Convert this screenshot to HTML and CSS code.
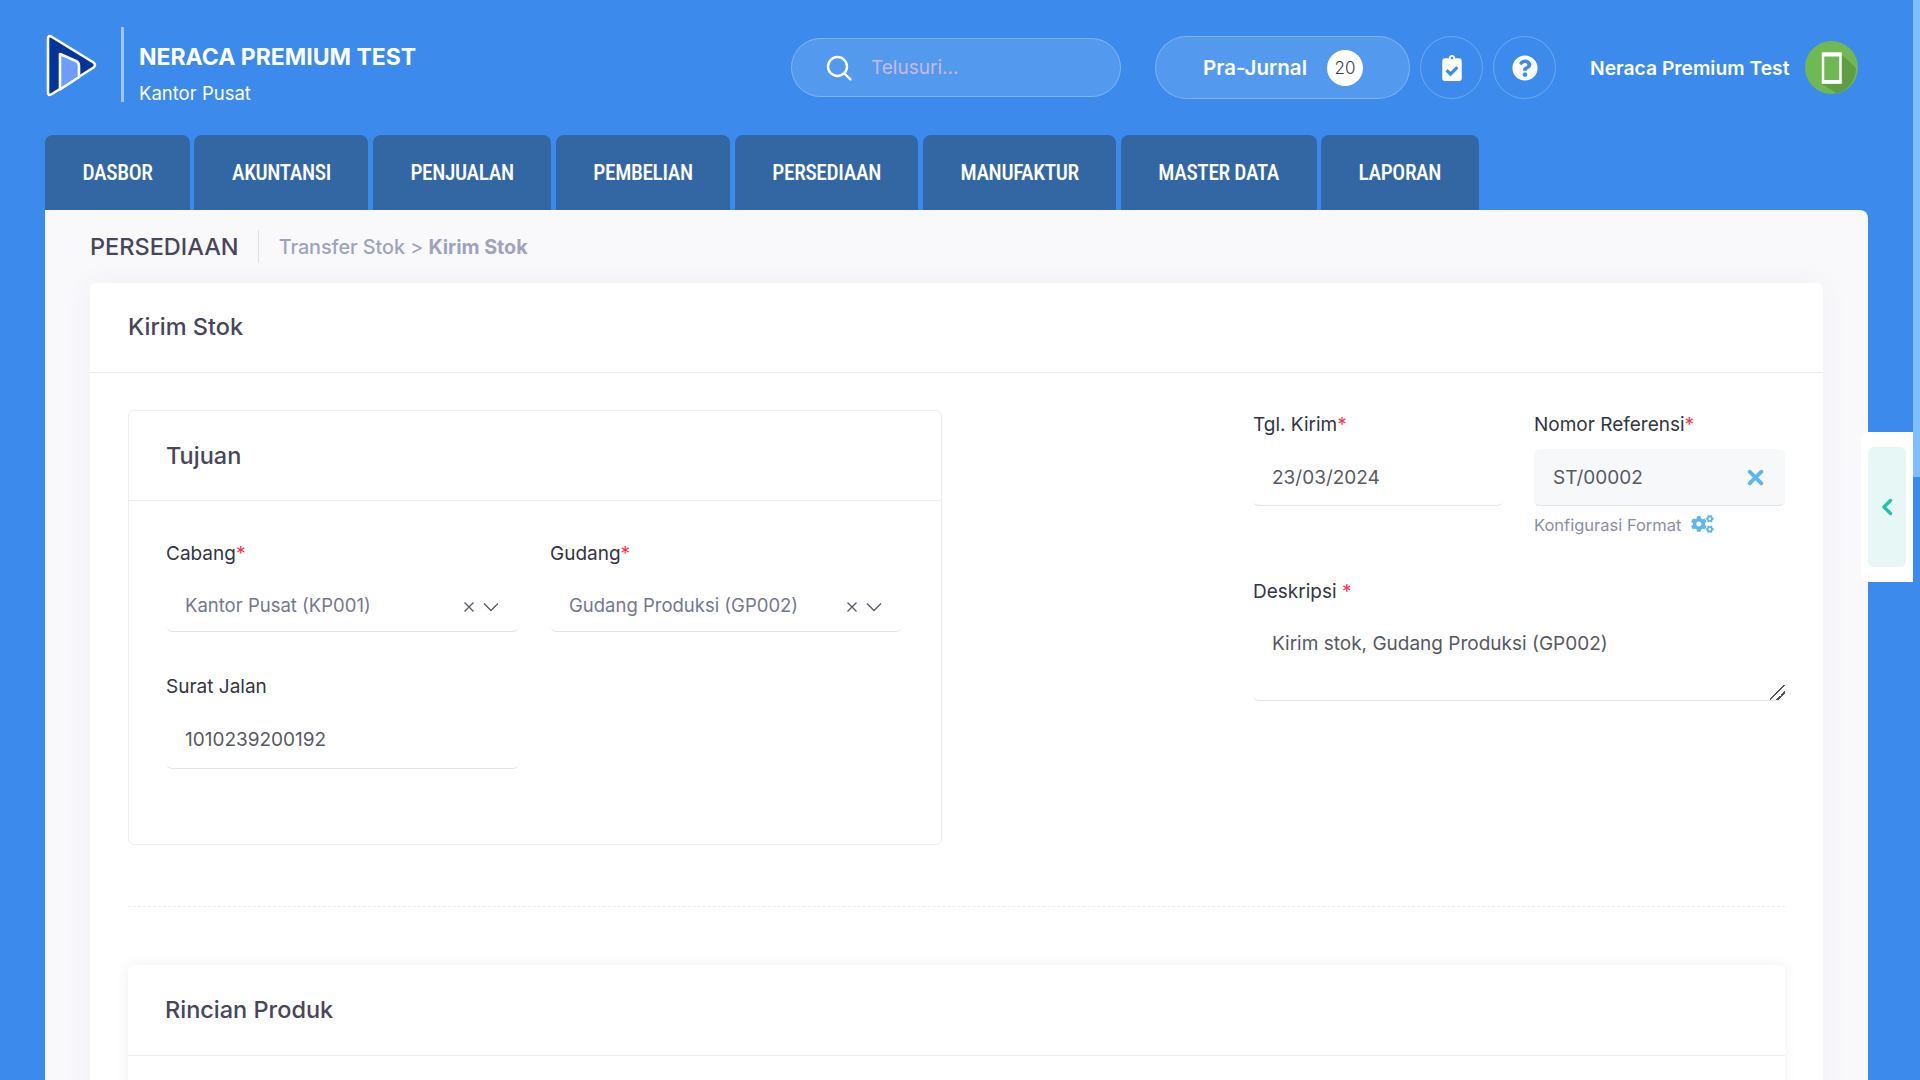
FILE: index.html
```html
<!DOCTYPE html>
<html lang="id">
<head>
<meta charset="utf-8">
<title>Kirim Stok</title>
<link rel="stylesheet" href="styles.css">
</head>
<body>
<header class="topbar">
  <svg class="logo" viewBox="47 33 52 66" aria-hidden="true">
    <path d="M49 39 Q49 34.500 53 37 L94.500 62.500 Q97.500 65 94.500 67.500 L53 94 Q49 96.500 49 92 Z" fill="#043399" stroke="#fff" stroke-width="2.600" stroke-linejoin="round"/>
    <path d="M61 54 L77 61 Q80 62.500 80 66 L80 77 L61 89.500 Z" fill="#6f9cff" stroke="#fff" stroke-width="2.600" stroke-linejoin="round"/>
  </svg>
  <div class="brand">
    <div class="brand-title">NERACA PREMIUM TEST</div>
    <div class="brand-sub">Kantor Pusat</div>
  </div>
  <div class="search">
    <svg class="search-icon" viewBox="0 0 28 28" aria-hidden="true"><circle cx="12.5" cy="12.5" r="9.5" fill="none" stroke="#fff" stroke-width="2.4"/><path d="M19.5 19.5 L25.5 25.5" stroke="#fff" stroke-width="2.4" stroke-linecap="round"/></svg>
    <span class="search-text">Telusuri...</span>
  </div>
  <div class="prajurnal">
    <span class="prajurnal-text">Pra-Jurnal</span>
    <span class="badge">20</span>
  </div>
  <div class="round-btn">
    <svg class="icon-clip" viewBox="0 0 384 512" aria-hidden="true"><path fill="#fff" d="M336 64h-80c0-35.300-28.700-64-64-64s-64 28.700-64 64H48C21.500 64 0 85.500 0 112v352c0 26.500 21.500 48 48 48h288c26.500 0 48-21.500 48-48V112c0-26.500-21.500-48-48-48zM192 40c13.300 0 24 10.700 24 24s-10.700 24-24 24-24-10.700-24-24 10.700-24 24-24zm121.200 231.800l-143 141.800c-4.700 4.700-12.300 4.600-17-.1l-82.600-83.300c-4.700-4.700-4.600-12.300.1-17L99.100 285c4.700-4.700 12.300-4.600 17 .1l46 46.400 106-105.200c4.700-4.700 12.300-4.600 17 .1l28.200 28.400c4.700 4.800 4.600 12.300-.1 17z"/></svg>
  </div>
  <div class="round-btn">
    <svg class="icon-help" viewBox="0 0 512 512" aria-hidden="true"><path fill="#fff" d="M504 256c0 136.997-111.043 248-248 248S8 392.997 8 256C8 119.083 119.043 8 256 8s248 111.083 248 248zM262.655 90c-54.497 0-89.255 22.957-116.549 63.758-3.536 5.286-2.353 12.415 2.715 16.258l34.699 26.310c5.205 3.947 12.621 3.008 16.665-2.122 17.864-22.658 30.113-35.797 57.303-35.797 20.429 0 45.698 13.148 45.698 32.958 0 14.976-12.363 22.667-32.534 33.976C247.128 238.528 216 254.941 216 296v4c0 6.627 5.373 12 12 12h56c6.627 0 12-5.373 12-12v-1.333c0-28.462 83.186-29.647 83.186-106.667 0-58.002-60.165-102-116.531-102zM256 338c-25.365 0-46 20.635-46 46 0 25.364 20.635 46 46 46s46-20.636 46-46c0-25.365-20.635-46-46-46z"/></svg>
  </div>
  <span class="user-name">Neraca Premium Test</span>
  <svg class="avatar" viewBox="0 0 53 53" aria-hidden="true">
    <circle cx="26.500" cy="26.500" r="26.500" fill="#6fb853"/>
    <path d="M36 13 L51 27 A26.500 26.500 0 0 1 32 52.500 L17 43 Z" fill="#5f9d43"/>
    <rect x="18" y="12.500" width="17.500" height="29" fill="#6fb853" stroke="#fff" stroke-width="2.500"/>
    <path d="M17 13h19.500v2.500H17zM17 39h19.500v3.500H17z" fill="#fff"/>
  </svg>
</header>

<nav class="tabs">
  <a class="tab">DASBOR</a>
  <a class="tab">AKUNTANSI</a>
  <a class="tab">PENJUALAN</a>
  <a class="tab">PEMBELIAN</a>
  <a class="tab">PERSEDIAAN</a>
  <a class="tab">MANUFAKTUR</a>
  <a class="tab">MASTER DATA</a>
  <a class="tab">LAPORAN</a>
</nav>

<main class="content">
  <div class="crumbs">
    <h1 class="crumb-title">PERSEDIAAN</h1>
    <span class="crumb-path">Transfer Stok <span class="crumb-sep">&gt;</span> <b class="crumb-current">Kirim Stok</b></span>
  </div>

  <section class="card">
    <h2 class="card-head">Kirim Stok</h2>
    <div class="card-body">
      <div class="top-row">
        <div class="panel">
          <h3 class="panel-head">Tujuan</h3>
          <div class="panel-body">
            <div class="field">
              <label class="label">Cabang<i class="req">*</i></label>
              <div class="input select"><span class="select-value">Kantor Pusat (KP001)</span>
                <svg class="select-x" viewBox="0 0 12 12" aria-hidden="true"><path d="M1.500 1.500l9 9M10.500 1.500l-9 9" stroke="#555a66" stroke-width="1.300"/></svg>
                <svg class="select-chev" viewBox="0 0 16 10" aria-hidden="true"><path d="M1 1.500l7 7 7-7" fill="none" stroke="#555a66" stroke-width="1.300"/></svg>
              </div>
            </div>
            <div class="field">
              <label class="label">Gudang<i class="req">*</i></label>
              <div class="input select"><span class="select-value">Gudang Produksi (GP002)</span>
                <svg class="select-x" viewBox="0 0 12 12" aria-hidden="true"><path d="M1.500 1.500l9 9M10.500 1.500l-9 9" stroke="#555a66" stroke-width="1.300"/></svg>
                <svg class="select-chev" viewBox="0 0 16 10" aria-hidden="true"><path d="M1 1.500l7 7 7-7" fill="none" stroke="#555a66" stroke-width="1.300"/></svg>
              </div>
            </div>
            <div class="field">
              <label class="label">Surat Jalan</label>
              <div class="input plain">1010239200192</div>
            </div>
          </div>
        </div>

        <div class="side-form">
          <div class="side-grid">
            <div class="field-r">
              <label class="label">Tgl. Kirim<i class="req">*</i></label>
              <div class="input tall">23/03/2024</div>
            </div>
            <div class="field-r">
              <label class="label">Nomor Referensi<i class="req">*</i></label>
              <div class="input tall filled">ST/00002
                <svg class="ref-x" viewBox="0 0 16 16" aria-hidden="true"><path d="M2.500 2.500l11 11M13.500 2.500l-11 11" stroke="#5cb7ee" stroke-width="3.600" stroke-linecap="round"/></svg>
              </div>
              <div class="format-link">Konfigurasi Format
                <svg class="cogs" viewBox="0 0 640 512" aria-hidden="true"><path fill="#5cb7ee" d="M512.100 191l-8.200 14.300c-3 5.300-9.400 7.500-15.100 5.400-11.800-4.400-22.600-10.700-32.100-18.600-4.600-3.800-5.800-10.500-2.800-15.700l8.200-14.300c-6.900-8-12.300-17.300-15.900-27.400h-16.500c-6 0-11.200-4.300-12.200-10.300-2-12-2.100-24.600 0-37.100 1-6 6.200-10.400 12.200-10.400h16.500c3.600-10.100 9-19.400 15.900-27.400l-8.200-14.300c-3-5.200-1.900-11.900 2.800-15.700 9.500-7.900 20.400-14.200 32.100-18.600 5.700-2.100 12.100.1 15.100 5.400l8.200 14.300c10.500-1.900 21.200-1.900 31.700 0L552 6.300c3-5.300 9.400-7.500 15.100-5.400 11.800 4.400 22.600 10.700 32.100 18.600 4.600 3.800 5.800 10.500 2.800 15.700l-8.200 14.300c6.900 8 12.300 17.300 15.900 27.400h16.500c6 0 11.200 4.300 12.200 10.300 2 12 2.100 24.600 0 37.100-1 6-6.200 10.400-12.200 10.400h-16.500c-3.600 10.100-9 19.400-15.900 27.400l8.200 14.300c3 5.200 1.900 11.900-2.800 15.700-9.500 7.900-20.400 14.200-32.100 18.600-5.700 2.100-12.100-.1-15.100-5.400l-8.200-14.300c-10.400 1.900-21.200 1.900-31.700 0zm-10.500-58.800c38.500 29.600 82.400-14.300 52.800-52.800-38.500-29.700-82.400 14.300-52.800 52.800zM386.300 286.100l33.700 16.800c10.100 5.800 14.500 18.100 10.500 29.100-8.900 24.200-26.400 46.400-42.600 65.800-7.400 8.900-20.200 11.100-30.300 5.300l-29.100-16.800c-16 13.700-34.600 24.600-54.900 31.700v33.600c0 11.600-8.300 21.600-19.700 23.600-24.600 4.200-50.400 4.400-75.900 0-11.500-2-20-11.900-20-23.600V418c-20.300-7.200-38.900-18-54.900-31.700L74 403c-10 5.800-22.900 3.600-30.300-5.300-16.200-19.400-33.300-41.600-42.200-65.700-4-10.900.4-23.200 10.500-29.100l33.300-16.800c-3.900-20.900-3.900-42.400 0-63.400L12 205.800c-10.100-5.800-14.600-18.100-10.500-29 8.900-24.200 26-46.400 42.200-65.800 7.400-8.900 20.200-11.100 30.300-5.300l29.100 16.800c16-13.700 34.600-24.600 54.900-31.700V57.100c0-11.500 8.200-21.500 19.600-23.500 24.600-4.200 50.500-4.400 76-.1 11.500 2 20 11.900 20 23.600v33.600c20.300 7.200 38.900 18 54.900 31.700l29.100-16.800c10-5.800 22.900-3.600 30.300 5.300 16.200 19.400 33.200 41.600 42.100 65.800 4 10.900.1 23.200-10 29.100l-33.700 16.800c3.900 21 3.900 42.500 0 63.500zm-117.600 21.100c59.200-77-28.700-164.900-105.700-105.700-59.200 77 28.700 164.900 105.700 105.700zm243.400 182.700l-8.200 14.300c-3 5.300-9.400 7.500-15.100 5.400-11.800-4.400-22.600-10.700-32.100-18.600-4.600-3.800-5.800-10.500-2.800-15.700l8.200-14.300c-6.900-8-12.300-17.300-15.900-27.400h-16.500c-6 0-11.200-4.300-12.200-10.300-2-12-2.100-24.600 0-37.100 1-6 6.200-10.400 12.200-10.400h16.500c3.600-10.100 9-19.400 15.900-27.400l-8.200-14.300c-3-5.200-1.900-11.900 2.800-15.700 9.500-7.900 20.400-14.200 32.100-18.600 5.700-2.100 12.100.1 15.100 5.400l8.200 14.300c10.500-1.900 21.200-1.900 31.700 0l8.200-14.300c3-5.300 9.400-7.500 15.100-5.400 11.800 4.400 22.600 10.700 32.100 18.600 4.600 3.800 5.800 10.500 2.800 15.700l-8.200 14.300c6.900 8 12.300 17.300 15.900 27.400h16.500c6 0 11.200 4.300 12.200 10.300 2 12 2.100 24.600 0 37.100-1 6-6.200 10.400-12.200 10.400h-16.500c-3.600 10.100-9 19.400-15.900 27.400l8.200 14.300c3 5.200 1.900 11.900-2.800 15.700-9.500 7.900-20.400 14.200-32.100 18.600-5.700 2.100-12.100-.1-15.100-5.400l-8.200-14.300c-10.400 1.900-21.200 1.900-31.700 0zM501.600 431c38.500 29.600 82.400-14.300 52.800-52.800-38.500-29.600-82.400 14.300-52.800 52.800z"/></svg>
              </div>
            </div>
          </div>
          <div class="desc">
            <label class="label">Deskripsi <i class="req">*</i></label>
            <textarea class="textarea">Kirim stok, Gudang Produksi (GP002)</textarea>
          </div>
        </div>
      </div>

      <hr class="dashed">

      <section class="detail-card">
        <h3 class="detail-head">Rincian Produk</h3>
        <div class="detail-body"></div>
      </section>
    </div>
  </section>
</main>

<aside class="side-tab">
  <div class="side-tab-inner">
    <svg class="side-chev" viewBox="0 0 12 18" aria-hidden="true"><path d="M9.500 2.500L3 9l6.500 6.500" fill="none" stroke="#1fc5a8" stroke-width="3.400" stroke-linecap="round" stroke-linejoin="round"/></svg>
  </div>
</aside>
<div class="scroll-thumb"></div>
</body>
</html>
```
FILE: styles.css
```css
* { box-sizing: border-box; }
html, body { height: 100%; }
body {
  margin: 0;
  height: 1080px;
  overflow: hidden;
  position: relative;
  background: #3c8bec;
  font-family: Inter, Roboto, sans-serif;
  color: #48465b;
  display: flex;
  flex-direction: column;
}
h1, h2, h3 { margin: 0; }

/* top bar */
.topbar {
  height: 135px;
  flex: none;
  display: flex;
  align-items: center;
  padding-left: 46px;
  color: #fff;
}
.logo { width: 52px; height: 66px; flex: none; margin-top: -4px; }
.brand {
  margin-left: 23px;
  padding-left: 15px;
  height: 75px;
  margin-top: -7px;
  border-left: 3px solid rgba(255, 255, 255, 0.5);
  width: 670px;
  flex: none;
}
.brand-title { font-size: 23px; font-weight: 700; line-height: 26px; margin-top: 17px; white-space: nowrap; }
.brand-sub { font-size: 18.5px; line-height: 22px; margin-top: 12px; }
.search {
  width: 330px;
  height: 59px;
  flex: none;
  border: 1px solid rgba(255, 255, 255, 0.25);
  background: rgba(255, 255, 255, 0.12);
  border-radius: 30px;
  display: flex;
  align-items: center;
  padding-left: 33px;
}
.search-icon { width: 28px; height: 28px; flex: none; }
.search-text { margin-left: 18px; font-size: 19px; color: #c9b9e0; }
.prajurnal {
  margin-left: 34px;
  width: 255px;
  height: 63px;
  flex: none;
  border: 1px solid rgba(255, 255, 255, 0.25);
  background: rgba(255, 255, 255, 0.12);
  border-radius: 32px;
  display: flex;
  align-items: center;
  padding-left: 47px;
}
.prajurnal-text { font-size: 20.5px; font-weight: 600; width: 124px; flex: none; white-space: nowrap; }
.badge {
  width: 36px;
  height: 36px;
  border-radius: 50%;
  background: #fff;
  color: #3a3a4a;
  font-size: 17px;
  font-weight: 300;
  display: flex;
  align-items: center;
  justify-content: center;
  flex: none;
}
.round-btn {
  margin-left: 10px;
  width: 63px;
  height: 63px;
  flex: none;
  border-radius: 50%;
  border: 1px solid rgba(255, 255, 255, 0.25);
  display: flex;
  align-items: center;
  justify-content: center;
}
.icon-clip { width: 20px; height: 26px; }
.icon-help { width: 26px; height: 26px; }
.user-name { margin-left: 34px; font-size: 19.3px; font-weight: 600; width: 215px; flex: none; white-space: nowrap; }
.avatar { width: 53px; height: 53px; flex: none; }

/* tabs */
.tabs { display: flex; gap: 4.5px; padding-left: 45px; height: 75px; flex: none; }
.tab {
  background: #3367a3;
  color: #fff;
  border-radius: 8px 8px 0 0;
  font-family: Roboto, sans-serif;
  font-stretch: 75%;
  font-size: 21.35px;
  font-weight: 500;
  letter-spacing: -0.35px;
  line-height: 75px;
  padding: 0 37.5px;
  white-space: nowrap;
}

/* content */
.content {
  margin-left: 45px;
  width: 1823px;
  flex: 1;
  min-height: 0;
  background: #f9f9fc;
  border-radius: 0 8px 0 0;
  padding: 0 45px;
  overflow: hidden;
}
.crumbs { height: 73px; display: flex; align-items: center; }
.crumb-title { font-size: 23.5px; font-weight: 500; color: #48465b; padding-right: 19px; line-height: 33px; border-right: 1px solid #dcdde6; }
.crumb-path { margin-left: 20px; font-size: 19.8px; font-weight: 500; color: #9ea3bd; letter-spacing: -0.05px; }
.crumb-sep { font-weight: 400; }
.crumb-current { font-weight: 700; }

.card { background: #fff; border-radius: 6px 6px 0 0; box-shadow: 0 0 30px rgba(82, 63, 105, 0.05); }
.card-head {
  height: 90px;
  border-bottom: 1px solid #ebedf2;
  padding-left: 38px;
  font-size: 23.5px;
  font-weight: 500;
  line-height: 88px;
}
.card-body { padding: 37px 38px 38px; }
.top-row { display: flex; justify-content: space-between; }

.panel { width: 814px; height: 435px; flex: none; border: 1px solid #ebedf2; border-radius: 6px; }
.panel-head {
  height: 90px;
  border-bottom: 1px solid #ebedf2;
  padding-left: 37px;
  font-size: 23.5px;
  font-weight: 500;
  line-height: 90px;
}
.panel-body {
  display: grid;
  grid-template-columns: 353px 352px;
  column-gap: 31px;
  row-gap: 43px;
  padding: 41px 0 0 37px;
}
.label { display: block; font-size: 19px; line-height: 24px; color: #333542; }
.req { color: #f4364c; font-style: normal; }
.input {
  position: relative;
  margin-top: 12px;
  height: 55px;
  border-bottom: 1px solid #e2e5ec;
  border-radius: 6px;
  padding-left: 19px;
  font-size: 19px;
  line-height: 52px;
  color: #575962;
}
.select { margin-top: 11px; line-height: 56px; font-size: 18.5px; }
.plain { margin-top: 15px; }
.select-value { color: #74788d; }
.select-x { position: absolute; right: 44px; top: 24px; width: 12px; height: 12px; }
.select-chev { position: absolute; right: 20px; top: 25px; width: 16px; height: 10px; }

.side-form { width: 532px; flex: none; padding-top: 3px; }
.side-grid { display: grid; grid-template-columns: 250px 251px; column-gap: 31px; }
.tall { height: 57px; margin-top: 12px; line-height: 58px; }
.filled { background: #f7f8fa; }
.ref-x { position: absolute; right: 21px; top: 20px; width: 17px; height: 17px; }
.format-link {
  margin-top: 9px;
  font-size: 16.5px;
  line-height: 20px;
  color: #8a8ea3;
  display: flex;
  align-items: center;
  gap: 10px;
  white-space: nowrap;
}
.cogs { width: 23px; height: 18px; margin-top: -2px; }
.desc { margin-top: 45px; }
.textarea {
  display: block;
  width: 100%;
  height: 80px;
  margin-top: 17px;
  border: 0;
  border-bottom: 1px solid #e2e5ec;
  border-radius: 6px;
  padding: 11px 19px;
  font-family: inherit;
  font-size: 19px;
  line-height: 24px;
  color: #575962;
  background: #fff;
  outline: none;
  resize: vertical;
}
.textarea::-webkit-resizer {
  background: linear-gradient(135deg, transparent 0 46%, #555 46% 53%, transparent 53% 70%, #555 70% 77%, transparent 77%);
}

.dashed { margin: 61px 0 58px; border: 0; border-top: 1px dashed #ebedf2; height: 0; }
.detail-card { background: #fff; border-radius: 6px; box-shadow: 0 0 13px rgba(82, 63, 105, 0.08); }
.detail-head {
  height: 91px;
  border-bottom: 1px solid #ebedf2;
  padding-left: 37px;
  font-size: 23.5px;
  font-weight: 500;
  line-height: 90px;
}
.detail-body { height: 200px; }

/* floating */
.side-tab {
  position: absolute;
  left: 1861px;
  top: 432px;
  width: 52px;
  height: 150px;
  background: #fff;
  border-radius: 8px 0 0 8px;
  padding: 15px 7px;
}
.side-tab-inner {
  height: 120px;
  background: #e6f7f5;
  border-radius: 6px;
  display: flex;
  align-items: center;
  justify-content: center;
}
.side-chev { width: 12px; height: 18px; }
.scroll-thumb { position: absolute; right: 0; top: 0; width: 7px; height: 477px; background: #7fbfff; }
```
